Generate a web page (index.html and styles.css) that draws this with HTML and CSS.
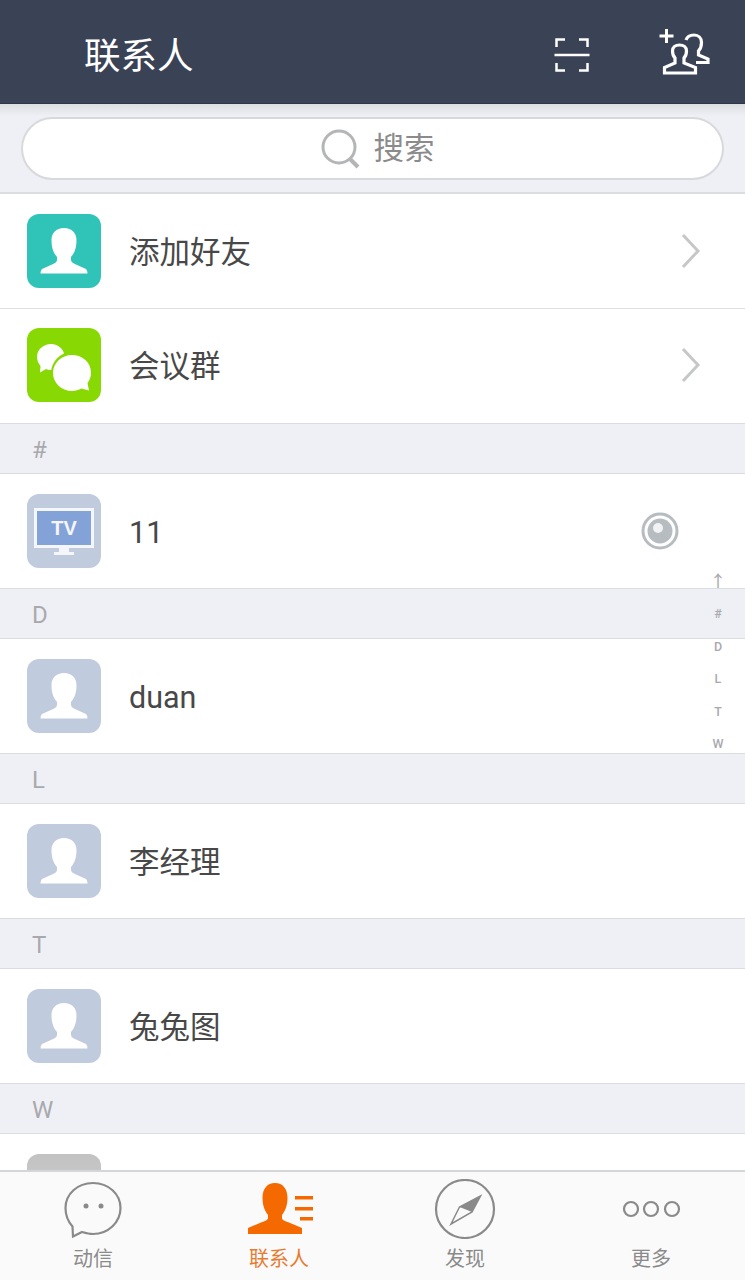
FILE: index.html
```html
<!DOCTYPE html>
<html lang="zh-CN">
<head>
    <meta charset="UTF-8">
    <meta name="viewport" content="width=device-width, initial-scale=1.0">
    <title>联系人</title>
    <link rel="stylesheet" href="styles.css">
</head>
<body>
    <svg class="defs" width="0" height="0">
        <symbol id="person" viewBox="0 0 74 74">
            <path d="M37 14C45 14 49.500 19 49.500 26C49.500 34 47.500 39 44 43V46C44 48 46 49 49 50.500L59 55C60 56 60.500 58 60.500 59.500H13.500C13.500 58 14 56 15 55L25 50.500C28 49 30 48 30 46V43C26.500 39 24.500 34 24.500 26C24.500 19 29 14 37 14Z" fill="#fff"/>
        </symbol>
        <symbol id="chevron" viewBox="0 0 20 36">
            <path d="M2 2L17 18L2 34" fill="none" stroke="#c6c7c9" stroke-width="3"/>
        </symbol>
    </svg>

    <div id="app">
        <header class="topbar">
            <h1 class="title">联系人</h1>
            <svg class="scan-icon" width="36" height="36" viewBox="0 0 36 36" fill="none" stroke="#fff" stroke-width="2.500">
                <path d="M11 2.500H2.500V10M25 2.500H33.500V10M0.500 18H35.500M2.500 26V33.500H11M33.500 26V33.500H25"/>
            </svg>
            <svg class="add-icon" width="52" height="50" viewBox="0 0 52 50" fill="none" stroke="#fff" stroke-width="3.200">
                <path d="M1.500 8H15.500M8.500 1V15" stroke-width="3"/>
                <path d="M6.500 45V39.500L17 35V30C15 28 14.500 25 14.500 23C14.500 19 17.500 17 21.500 17C25.500 17 28.500 19 28.500 23C28.500 25 28 28 26 30V35L37.500 39.500V45Z"/>
                <path d="M28 12C29 9 32 7 36 7C40.500 7 43.500 10 43.500 14.500C43.500 18 42.500 21 40.500 23V27L50 31V34.500H38"/>
            </svg>
        </header>

        <div class="search-band">
            <div class="search-box">
                <svg width="40" height="40" viewBox="0 0 40 40" fill="none" stroke="#b4b5b7">
                    <circle cx="18" cy="18" r="16" stroke-width="3"/>
                    <path d="M29 30L37 38" stroke-width="4"/>
                </svg>
                <span>搜索</span>
            </div>
        </div>

        <div class="list">
            <div class="row">
                <div class="avatar teal"><svg width="74" height="74"><use href="#person"/></svg></div>
                <span class="name">添加好友</span>
                <svg class="chevron" width="20" height="36"><use href="#chevron"/></svg>
            </div>
            <div class="row row-second">
                <div class="avatar green">
                    <svg width="74" height="74" viewBox="0 0 74 74">
                        <path d="M24 16C31.500 16 37.500 21.500 37.500 29C37.500 36.500 31.500 42 24 42C22 42 20.500 41.700 19 41L13 44.500L13.500 38C11.500 35.500 10 32.500 10 29C10 21.500 16.500 16 24 16Z" fill="#fff"/>
                        <circle cx="45" cy="45" r="21" fill="#88d804"/>
                        <path d="M45 27C55.500 27 64 34.500 64 44.500C64 49 62.500 52.500 60.500 55L62 62.500L54.500 60.500C51.500 62 48.500 63 45 63C34.500 63 26 55 26 45C26 35 34.500 27 45 27Z" fill="#fff"/>
                    </svg>
                </div>
                <span class="name">会议群</span>
                <svg class="chevron" width="20" height="36"><use href="#chevron"/></svg>
            </div>

            <div class="section">#</div>
            <div class="row">
                <div class="avatar slate">
                    <svg width="74" height="74" viewBox="0 0 74 74">
                        <rect x="8.500" y="15.500" width="57" height="37" fill="#83a2d8" stroke="#f4f6fa" stroke-width="3"/>
                        <text class="tv-text" x="37" y="41" text-anchor="middle">TV</text>
                        <rect x="32" y="54" width="10" height="4" fill="#f4f6fa"/>
                        <rect x="27" y="58" width="20" height="3" fill="#f4f6fa"/>
                    </svg>
                </div>
                <span class="name name-latin">11</span>
                <svg class="live-icon" width="40" height="40" viewBox="0 0 40 40">
                    <circle cx="20" cy="20" r="17" fill="#fff" stroke="#b6bcc0" stroke-width="3"/>
                    <circle cx="20" cy="20" r="12.500" fill="#b6bcc0"/>
                    <circle cx="18" cy="17" r="5" fill="#f0f2f3"/>
                </svg>
            </div>

            <div class="section">D</div>
            <div class="row">
                <div class="avatar slate"><svg width="74" height="74"><use href="#person"/></svg></div>
                <span class="name name-latin">duan</span>
            </div>

            <div class="section">L</div>
            <div class="row">
                <div class="avatar slate"><svg width="74" height="74"><use href="#person"/></svg></div>
                <span class="name">李经理</span>
            </div>

            <div class="section">T</div>
            <div class="row">
                <div class="avatar slate"><svg width="74" height="74"><use href="#person"/></svg></div>
                <span class="name">兔兔图</span>
            </div>

            <div class="section">W</div>
            <div class="row">
                <div class="avatar grey"></div>
            </div>

            <div class="index-bar">
                <span class="index-up">↑</span>
                <span>#</span>
                <span>D</span>
                <span>L</span>
                <span>T</span>
                <span>W</span>
            </div>
        </div>

        <nav class="tabbar">
            <div class="tab">
                <svg width="62" height="60" viewBox="0 0 62 60" fill="none" stroke="#8a8a8a" stroke-width="2.200">
                    <path d="M31 4C46.500 4 58.500 15 58.500 29C58.500 43 46.500 55 31 55C27 55 23.500 54 20 53L11 57.500L10.500 47.500C6 42.500 3.500 36 3.500 29C3.500 15 15.500 4 31 4Z"/>
                    <circle cx="24" cy="27" r="2.500" fill="#8a8a8a" stroke="none"/>
                    <circle cx="39" cy="27" r="2.500" fill="#8a8a8a" stroke="none"/>
                </svg>
                <span>动信</span>
            </div>
            <div class="tab active">
                <svg width="68" height="60" viewBox="-2 0 68 60" fill="#f56a00">
                    <path d="M28 4C36 4 40.500 10 40.500 19C40.500 27 38 32 35 36V39C35 41 38 42 42 43.500L55 49V55H1V49L14 43.500C18 42 21 41 21 39V36C18 32 15.500 27 15.500 19C15.500 10 20 4 28 4Z"/>
                    <rect x="48" y="17" width="19" height="3.500"/>
                    <rect x="48" y="28" width="19" height="3.500"/>
                    <rect x="53" y="38" width="14" height="3.500"/>
                </svg>
                <span>联系人</span>
            </div>
            <div class="tab">
                <svg width="62" height="60" viewBox="0 0 62 60" fill="none" stroke="#8a8a8a" stroke-width="2.200">
                    <circle cx="31" cy="30" r="29"/>
                    <path d="M46.500 17L25.500 28L17 45L38 33Z" stroke-width="1.500"/>
                    <path d="M46.500 17L25.500 28L38 33Z" fill="#8a8a8a" stroke="none"/>
                </svg>
                <span>发现</span>
            </div>
            <div class="tab">
                <svg width="62" height="60" viewBox="0 0 62 60" fill="none" stroke="#8a8a8a" stroke-width="2.200">
                    <circle cx="11" cy="30" r="7"/>
                    <circle cx="31" cy="30" r="7"/>
                    <circle cx="52" cy="30" r="7"/>
                </svg>
                <span>更多</span>
            </div>
        </nav>
    </div>
</body>
</html>
```

FILE: styles.css
```css
* {
    box-sizing: border-box;
}

body {
    margin: 0;
    font-family: Roboto, "Noto Sans CJK SC", sans-serif;
    background-color: #fff;
}

.defs {
    position: absolute;
}

#app {
    display: flex;
    flex-direction: column;
    height: 100vh;
    overflow: hidden;
}

/* barra superior */
.topbar {
    display: flex;
    align-items: center;
    flex: none;
    height: 104px;
    padding-left: 84px;
    background-color: #3a4256;
    border-bottom: 1px solid #2f3646;
}

.title {
    flex: 1;
    margin: 4px 0 0;
    color: #fff;
    font-size: 36.500px;
    font-weight: 400;
}

.scan-icon {
    margin-right: 68px;
    margin-top: 6px;
}

.add-icon {
    margin-right: 35px;
    margin-top: 2px;
}

/* busca */
.search-band {
    flex: none;
    height: 90px;
    padding: 13px 21px 0;
    background: linear-gradient(#dcdde1, #eff0f5 12px);
    border-bottom: 2px solid #dcdde0;
}

.search-box {
    display: flex;
    align-items: center;
    justify-content: center;
    gap: 13px;
    height: 63px;
    padding-left: 10px;
    background-color: #fff;
    border: 2px solid #d8d9dc;
    border-radius: 32px;
    color: #8b8b8b;
    font-size: 30.500px;
}

.search-box span {
    margin-bottom: 5px;
}

/* lista */
.list {
    position: relative;
    flex: 1;
    overflow: hidden;
}

.row {
    display: flex;
    align-items: center;
    height: 115px;
    padding: 0 44px 1px 27px;
    background-color: #fff;
    border-bottom: 1px solid #dcdde0;
}

.row-second {
    padding-bottom: 3px;
}

.avatar {
    flex: none;
    width: 74px;
    height: 74px;
    border-radius: 12px;
}

.avatar svg {
    display: block;
}

.teal {
    background-color: #30c4b8;
}

.green {
    background-color: #88d804;
}

.slate {
    background-color: #c0cbdd;
}

.grey {
    background: linear-gradient(#c2c2c2, #d4d4d4);
}

.tv-text {
    fill: #f4f6fa;
    font-family: "Liberation Sans", sans-serif;
    font-size: 20px;
    font-weight: 700;
}

.name {
    flex: 1;
    margin: 0 0 2px 28px;
    color: #484848;
    font-size: 30.500px;
}

.name-latin {
    margin-bottom: 0;
    padding-top: 4px;
}

.live-icon {
    margin-right: 21px;
}

.section {
    display: flex;
    align-items: center;
    height: 50px;
    padding: 2px 0 0 32px;
    background-color: #eff0f5;
    border-bottom: 1px solid #dcdde0;
    color: #a9a9ad;
    font-size: 24px;
}

.index-bar {
    position: absolute;
    top: 379px;
    right: 14px;
    display: flex;
    flex-direction: column;
    align-items: center;
    gap: 14.400px;
    width: 26px;
    color: #a9a9ad;
    font-size: 12.500px;
    font-weight: 500;
    line-height: 18px;
}

.index-up {
    font-size: 16px;
    font-weight: 500;
}

/* abas */
.tabbar {
    display: flex;
    flex: none;
    height: 110px;
    background-color: #fafafa;
    border-top: 2px solid #d5d6da;
}

.tab {
    display: flex;
    flex-direction: column;
    align-items: center;
    width: 186px;
    padding-top: 7px;
    color: #8a8a8a;
    font-size: 20px;
    line-height: 28px;
}

.tab svg {
    margin-bottom: 6px;
}

.active {
    color: #e87a30;
}
```
